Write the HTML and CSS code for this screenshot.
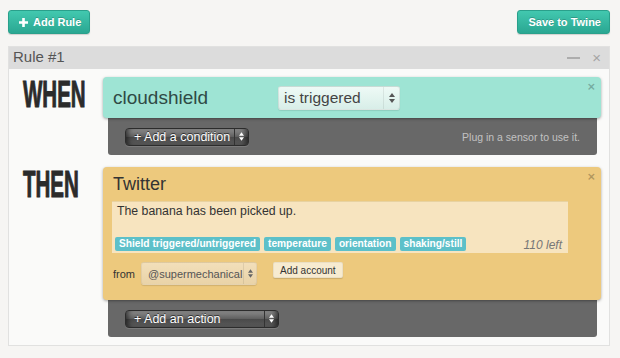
FILE: index.html
```html
<!DOCTYPE html>
<html>
<head>
<meta charset="utf-8">
<title>Rules</title>
<link rel="stylesheet" href="styles.css">
</head>
<body>
<div class="toolbar">
  <button class="btn"><svg class="plus" width="9" height="9" viewBox="0 0 9 9"><path d="M3.2 0H5.8V3.2H9V5.8H5.8V9H3.2V5.8H0V3.2H3.2Z" fill="#fff"/></svg>Add Rule</button>
  <button class="btn">Save to Twine</button>
</div>

<section class="rule">
  <header class="rule-head">
    <span class="rule-title">Rule #1</span>
    <span class="head-icons"><span class="minimize"></span><span class="head-close">×</span></span>
  </header>

  <div class="rule-body">
    <div class="label"><span>WHEN</span></div>
    <div class="block">
      <div class="card card-when">
        <span class="sensor">cloudshield</span>
        <div class="select light">
          <span class="sel-text">is triggered</span>
          <span class="sel-arrows"><svg width="6" height="10" viewBox="0 0 6 10"><path d="M3 0L6 4H0Z M0 6H6L3 10Z" fill="#555"/></svg></span>
        </div>
        <span class="card-close">×</span>
      </div>
      <div class="tray">
        <div class="select dark cond">
          <span class="sel-text">+ Add a condition</span>
          <span class="sel-arrows"><svg width="5" height="9" viewBox="0 0 6 10"><path d="M3 0L6 4H0Z M0 6H6L3 10Z" fill="#fff"/></svg></span>
        </div>
        <span class="hint">Plug in a sensor to use it.</span>
      </div>
    </div>

    <div class="label"><span>THEN</span></div>
    <div class="block">
      <div class="card card-then">
        <div class="action-title">Twitter</div>
        <div class="textarea">
          <div class="message">The banana has been picked up.</div>
          <div class="tags-row">
            <span class="tag">Shield triggered/untriggered</span>
            <span class="tag">temperature</span>
            <span class="tag">orientation</span>
            <span class="tag">shaking/still</span>
            <span class="left">110 left</span>
          </div>
        </div>
        <div class="from-row">
          <span class="from">from</span>
          <div class="select beige">
            <span class="sel-text">@supermechanical</span>
            <span class="sel-arrows"><svg width="5" height="9" viewBox="0 0 6 10"><path d="M3 0L6 4H0Z M0 6H6L3 10Z" fill="#666"/></svg></span>
          </div>
          <button class="add-account">Add account</button>
        </div>
        <span class="card-close">×</span>
      </div>
      <div class="tray">
        <div class="select dark act">
          <span class="sel-text">+ Add an action</span>
          <span class="sel-arrows"><svg width="5" height="9" viewBox="0 0 6 10"><path d="M3 0L6 4H0Z M0 6H6L3 10Z" fill="#fff"/></svg></span>
        </div>
      </div>
    </div>
  </div>
</section>
</body>
</html>
```

FILE: styles.css
```css
* { box-sizing: border-box; }

body {
  margin: 0;
  background: #f6f5f3;
  font-family: "Liberation Sans", Arial, sans-serif;
  color: #333;
}

.toolbar {
  display: flex;
  justify-content: space-between;
  padding: 10px 10px 0 8px;
}

.btn {
  height: 24px;
  display: flex;
  align-items: center;
  gap: 5px;
  padding: 0 8px 0 10px;
  border: 1px solid #2aa08b;
  border-radius: 3px;
  background: linear-gradient(#42c8af, #2aa792);
  color: #fff;
  font: bold 11px "Liberation Sans", Arial, sans-serif;
  text-shadow: 0 -1px 0 rgba(0, 0, 0, 0.2);
  box-shadow: 0 1px 1px rgba(0, 0, 0, 0.15);
}

.plus { display: block; }

.rule {
  margin: 12px 10px 0 8px;
  border: 1px solid #e1e1e0;
  background: #fafaf9;
}

.rule-head {
  height: 22px;
  background: #dcdcdc;
  display: flex;
  align-items: center;
  justify-content: space-between;
  padding: 0 8px 0 4px;
}

.rule-title {
  font-size: 15px;
  line-height: 18px;
  color: #555;
  margin-top: -2px;
}

.head-icons {
  display: flex;
  align-items: center;
  gap: 12px;
}

.minimize {
  width: 13px;
  height: 2px;
  background: #adadad;
}

.head-close {
  font-size: 15px;
  line-height: 14px;
  color: #a5a5a5;
}

.rule-body {
  display: grid;
  grid-template-columns: 80px 1fr;
  row-gap: 12px;
  padding: 8px 8px 8px 14px;
}

.label span {
  display: inline-block;
  font: bold 36px/36px "Liberation Sans", Arial, sans-serif;
  color: #2b2b2b;
  -webkit-text-stroke: 1px #2b2b2b;
  transform: scaleX(0.57);
  transform-origin: 0 0;
}

.card {
  position: relative;
  z-index: 1;
  border-radius: 4px;
  box-shadow: 0 1px 3px rgba(0, 0, 0, 0.35);
}

.card-close {
  position: absolute;
  top: 4px;
  right: 6px;
  font: bold 13px/12px "Liberation Sans", Arial, sans-serif;
  color: rgba(0, 0, 0, 0.25);
}

.card-when {
  height: 41px;
  background: #9ee4d4;
  display: flex;
  align-items: center;
  padding: 0 10px;
}

.sensor {
  width: 165px;
  font-size: 19px;
  color: #2f4a45;
}

.select {
  display: flex;
  align-items: stretch;
  border-radius: 3px;
}

.sel-text {
  flex: 1;
  display: flex;
  align-items: center;
  white-space: nowrap;
}

.sel-arrows {
  display: flex;
  align-items: center;
  justify-content: center;
}

.sel-arrows svg { display: block; }

.select.light {
  width: 122px;
  height: 24px;
  background: linear-gradient(#eefaf6, #d8eee8);
  border: 1px solid rgba(0, 0, 0, 0.08);
  box-shadow: 0 1px 1px rgba(0, 0, 0, 0.1);
  font-size: 15.5px;
  color: #444;
}

.select.light .sel-text { padding-left: 5px; }

.select.light .sel-arrows {
  width: 16px;
  border-left: 1px solid rgba(0, 0, 0, 0.07);
}

.tray {
  height: 37px;
  margin: 0 4px 0 5px;
  background: #686868;
  border-radius: 0 0 3px 3px;
  display: flex;
  align-items: center;
  justify-content: space-between;
  padding: 0 17px;
}

.select.dark {
  height: 18px;
  border: 1px solid #2c2c2c;
  border-radius: 4px;
  background: linear-gradient(#8c8c8c 0%, #606060 48%, #4a4a4a 52%, #5a5a5a 100%);
  box-shadow: inset 5px 0 5px -3px rgba(0, 0, 0, 0.55), inset -5px 0 5px -3px rgba(0, 0, 0, 0.55), 0 1px 0 rgba(255, 255, 255, 0.12);
  color: #fff;
  font-size: 12.5px;
  text-shadow: 0 -1px 0 rgba(0, 0, 0, 0.6);
}

.select.dark .sel-text { padding-left: 8px; }

.select.dark .sel-arrows {
  width: 14px;
  border-left: 1px solid #333;
}

.select.cond { width: 124px; }
.select.act { width: 154px; }

.hint {
  font-size: 10.5px;
  color: #c2c2c2;
}

.card-then {
  background: #edc97d;
  padding: 6px 33px 15px 9px;
}

.action-title {
  font-size: 18px;
  line-height: 22px;
  color: #333;
  padding-left: 1px;
}

.textarea {
  margin-top: 6px;
  height: 52px;
  background: #f7e4bf;
  border-top: 1px solid #e8d2a0;
  display: flex;
  flex-direction: column;
  justify-content: space-between;
  padding: 2px 6px 2px 3px;
}

.message {
  font-size: 12.3px;
  line-height: 15px;
  color: #333;
  padding-left: 2px;
}

.tags-row {
  display: flex;
  align-items: flex-end;
  gap: 4px;
}

.tag {
  height: 14px;
  line-height: 14px;
  padding: 0 4px;
  border-radius: 2px;
  background: #5dc0c9;
  color: #fff;
  font-size: 10.2px;
  font-weight: bold;
  white-space: nowrap;
}

.left {
  margin-left: auto;
  font-size: 12px;
  line-height: 12px;
  font-style: italic;
  color: #777;
}

.from-row {
  margin-top: 9px;
  display: flex;
  align-items: center;
  padding-left: 1px;
}

.from {
  font-size: 11px;
  color: #333;
  width: 28px;
}

.select.beige {
  width: 116px;
  height: 23px;
  background: linear-gradient(#f2dfba, #e9d3a8);
  border: 1px solid rgba(0, 0, 0, 0.05);
  box-shadow: 0 1px 1px rgba(0, 0, 0, 0.12);
  font-size: 11px;
  color: #555;
}

.select.beige .sel-text { padding-left: 6px; }

.select.beige .sel-arrows {
  width: 13px;
  border-left: 1px solid rgba(0, 0, 0, 0.08);
}

.add-account {
  align-self: flex-start;
  margin-left: 16px;
  height: 16px;
  padding: 0 6px;
  border: 1px solid rgba(0, 0, 0, 0.05);
  border-radius: 2px;
  background: #f7ebd0;
  box-shadow: 0 1px 1px rgba(0, 0, 0, 0.15);
  font: 10px "Liberation Sans", Arial, sans-serif;
  color: #333;
}
```
